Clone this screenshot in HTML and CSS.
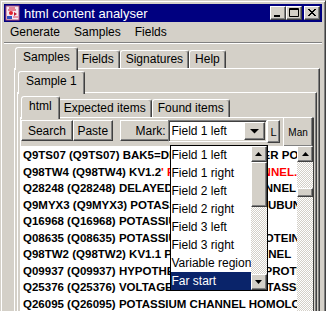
FILE: index.html
```html
<!DOCTYPE html>
<html lang="en">
<head>
    <meta charset="UTF-8">
    <title>html content analyser</title>
    <link rel="stylesheet" href="styles.css">
</head>
<body>
<div class="window">
    <div class="titlebar">
        <svg class="app-icon" width="16" height="16" viewBox="0 0 16 16">
            <rect x="1" y="1" width="13" height="14" fill="#f4e8f0" stroke="#b05078"/>
            <path d="M4 3h6M3 5h8" stroke="#d02040" stroke-width="1"/>
            <circle cx="6" cy="8" r="2" fill="#e02030"/>
            <path d="M9 7l3 2-3 2z" fill="#c01830"/>
            <rect x="2" y="11" width="5" height="3" fill="#3050c0"/>
            <path d="M8 12h5" stroke="#e04060"/>
        </svg>
        <span class="title">html content analyser</span>
        <div class="caption">
            <button class="cap"><svg width="16" height="14"><rect x="4" y="9" width="6" height="2" fill="#000"/></svg></button>
            <button class="cap"><svg width="16" height="14"><path d="M3.5 2.5h9v8h-9z M3 3.5h10" fill="none" stroke="#000"/></svg></button>
            <button class="cap close"><svg width="16" height="14"><path d="M4 3l7 7M5 3l7 7M11 3l-7 7M12 3l-7 7" stroke="#000" stroke-width="1"/></svg></button>
        </div>
    </div>
    <div class="menubar">
        <span>Generate</span><span>Samples</span><span>Fields</span>
    </div>
    <div class="sep"></div>
    <div class="main">
        <div class="tabpane">
            <div class="tabs">
                <div class="tab sel">Samples</div>
                <div class="tab">Fields</div>
                <div class="tab">Signatures</div>
                <div class="tab">Help</div>
            </div>
            <div class="panel">
                <div class="tabpane">
                    <div class="tabs">
                        <div class="tab sel">Sample 1</div>
                    </div>
                    <div class="panel">
                        <div class="tabpane">
                            <div class="tabs tall">
                                <div class="tab sel">html</div>
                                <div class="tab">Expected items</div>
                                <div class="tab">Found items</div>
                            </div>
                            <div class="panel inner">
                                <div class="toolbar">
                                    <button class="btn search">Search</button>
                                    <button class="btn paste">Paste</button>
                                    <button class="btn mark">Mark:</button>
                                    <div class="combo">
                                        <span class="combo-text">Field 1 left</span>
                                        <button class="btn arrow-btn"><svg width="9" height="5"><path d="M0 0h9l-4.5 4.5z" fill="#000"/></svg></button>
                                        <div class="popup">
                                            <div class="popup-items">
                                                <div class="item">Field 1 left</div>
                                                <div class="item">Field 1 right</div>
                                                <div class="item">Field 2 left</div>
                                                <div class="item">Field 2 right</div>
                                                <div class="item">Field 3 left</div>
                                                <div class="item">Field 3 right</div>
                                                <div class="item">Variable region</div>
                                                <div class="item selected">Far start</div>
                                            </div>
                                            <div class="vscroll small">
                                                <div class="btn sbtn"><svg width="7" height="4"><path d="M3.5 0l3.5 4h-7z" fill="#000"/></svg></div>
                                                <div class="btn thumb big"></div>
                                                <div class="track"></div>
                                                <div class="btn sbtn"><svg width="7" height="4"><path d="M0 0h7l-3.5 4z" fill="#000"/></svg></div>
                                            </div>
                                        </div>
                                    </div>
                                    <button class="btn l-btn">L</button>
                                    <button class="btn man">Man</button>
                                </div>
                                <div class="listwrap">
                                    <div class="list">
                                        <div class="row">Q9TS07 (Q9TS07) BAK5=DELAYED RECTIFIER POTASSIUM CHANNEL</div>
                                        <div class="row">Q98TW4 (Q98TW4) KV1.2<span class="red">' POTASSIUM CHANNEL.</span></div>
                                        <div class="row">Q28248 (Q28248) DELAYED RECTIFIER CHANNEL</div>
                                        <div class="row">Q9MYX3 (Q9MYX3) POTASSIUM CHANNEL SUBUNIT</div>
                                        <div class="row">Q16968 (Q16968) POTASSIUM CHANNEL</div>
                                        <div class="row">Q08635 (Q08635) POTASSIUM CHANNEL PROTEIN</div>
                                        <div class="row">Q98TW2 (Q98TW2) KV1.1 POTASSIUM CHANNEL</div>
                                        <div class="row">Q09937 (Q09937) HYPOTHETICAL 38.1 KDA PROTEIN</div>
                                        <div class="row">Q25376 (Q25376) VOLTAGE DEPENDENT POTASSIUM CHANNEL</div>
                                        <div class="row">Q26095 (Q26095) POTASSIUM CHANNEL HOMOLOG</div>
                                    </div>
                                    <div class="vscroll">
                                        <div class="btn sbtn"><svg width="7" height="4"><path d="M3.5 0l3.5 4h-7z" fill="#000"/></svg></div>
                                        <div class="btn thumb"></div>
                                    </div>
                                </div>
                            </div>
                        </div>
                    </div>
                </div>
            </div>
        </div>
    </div>
</div>
</body>
</html>
```

FILE: styles.css
```css
* {
    box-sizing: border-box;
}
body {
    margin: 0;
    background: #d4d0c8;
    font-family: "Liberation Sans", Arial, sans-serif;
    font-size: 12px;
    color: #000;
    overflow: hidden;
}
.window {
    width: 326px;
    height: 330px;
    display: flex;
    flex-direction: column;
    background: #d4d0c8;
    border: 1px solid;
    border-color: #d4d0c8 #404040 #404040 #d4d0c8;
    box-shadow: inset 1px 1px #fff, inset -1px -1px #808080;
    padding: 3px;
}
.titlebar {
    height: 18px;
    background: #000080;
    color: #fff;
    display: flex;
    align-items: center;
    padding: 0 2px 0 1px;
}
.title {
    margin-left: 3px;
    font-size: 13px;
}
.caption {
    margin-left: auto;
    display: flex;
}
.cap {
    width: 16px;
    height: 14px;
    padding: 0;
    background: #d4d0c8;
    border: 1px solid;
    border-color: #fff #404040 #404040 #fff;
    box-shadow: inset -1px -1px #808080;
    display: block;
}
.cap svg {
    display: block;
    margin: -1px 0 0 -1px;
}
.cap.close {
    margin-left: 2px;
}
.menubar {
    height: 20px;
    line-height: 20px;
    display: flex;
}
.menubar span {
    padding: 0 7px;
}
.menubar span:first-child {
    padding-left: 6px;
}
.sep {
    height: 2px;
    border-top: 1px solid #808080;
    border-bottom: 1px solid #fff;
}
.main {
    flex: 1;
    display: flex;
    padding: 3px 2px 0 10px;
}
.tabpane {
    flex: 1;
    display: flex;
    flex-direction: column;
    min-width: 0;
}
.tabs {
    display: flex;
    align-items: flex-end;
    height: 21px;
    padding-left: 3px;
}
.tabs.tall {
    height: 22px;
}
.tab {
    height: 18px;
    padding: 1px 5px 0;
    line-height: 15px;
    white-space: nowrap;
    border: 1px solid;
    border-bottom: 0;
    border-color: #fff #404040 transparent #fff;
    box-shadow: inset -1px 0 #808080;
    border-radius: 3px 3px 0 0;
}
.tab.sel {
    height: 23px;
    margin: 0 -2px -2px;
    padding: 2px 7px 0;
    background: #d4d0c8;
    position: relative;
    z-index: 1;
}
.panel {
    flex: 1;
    display: flex;
    flex-direction: column;
    border: 1px solid;
    border-color: #fff #404040 #404040 #fff;
    box-shadow: inset -1px -1px #808080;
    padding: 2px;
    min-width: 0;
}
.panel.inner {
    padding: 2px 0 0 0;
}
.toolbar {
    display: flex;
    align-items: flex-start;
    height: 26px;
}
.btn {
    height: 21px;
    padding: 0;
    font: 12px "Liberation Sans", Arial, sans-serif;
    color: #000;
    background: #d4d0c8;
    border: 1px solid;
    border-color: #fff #404040 #404040 #fff;
    box-shadow: inset -1px -1px #808080;
    display: flex;
    align-items: center;
    justify-content: center;
}
.search {
    width: 52px;
}
.paste {
    width: 40px;
}
.mark {
    width: 48px;
    margin-left: 7px;
    border-right: 0;
    box-shadow: inset 0 -1px #808080;
    justify-content: flex-end;
    padding-right: 2px;
}
.combo {
    width: 100px;
    height: 22px;
    display: flex;
    background: #fff;
    border: 1px solid;
    border-color: #808080 #fff #fff #808080;
    box-shadow: inset 1px 1px #404040, inset -1px -1px #d4d0c8;
    padding: 1px 1px 1px 1px;
    position: relative;
}
.combo-text {
    flex: 1;
    padding-left: 2px;
    line-height: 18px;
}
.arrow-btn {
    width: 21px;
    height: 18px;
}
.popup {
    position: absolute;
    left: 1px;
    top: 24px;
    width: 98px;
    height: 146px;
    border: 1px solid #000;
    background: #fff;
    display: flex;
    z-index: 5;
}
.popup-items {
    flex: 1;
    min-width: 0;
}
.item {
    height: 18px;
    line-height: 18px;
    padding-left: 1px;
    white-space: nowrap;
}
.item.selected {
    background: #0a246a;
    color: #fff;
}
.l-btn {
    width: 13px;
    height: 23px;
    font-size: 11px;
}
.man {
    width: 30px;
    height: 30px;
    margin: -3px 0 0 3px;
    font-size: 10px;
}
.listwrap {
    flex: 1;
    display: flex;
    min-height: 0;
}
.list {
    flex: 1;
    min-width: 0;
    background: #fff;
    padding: 1px 0 0 2px;
    font-weight: bold;
    font-size: 11.5px;
    overflow: hidden;
}
.row {
    height: 16.5px;
    line-height: 16.5px;
    white-space: nowrap;
}
.red {
    color: #f00;
}
.vscroll {
    width: 16px;
    display: flex;
    flex-direction: column;
    background: repeating-conic-gradient(#fff 0 25%, #d4d0c8 0 50%) 0 0 / 2px 2px;
}
.sbtn {
    height: 16px;
    flex: none;
}
.thumb {
    height: 9px;
    margin-top: 26px;
    flex: none;
}
.thumb.big {
    height: 45px;
    margin-top: 0;
}
.track {
    flex: 1;
}
```
